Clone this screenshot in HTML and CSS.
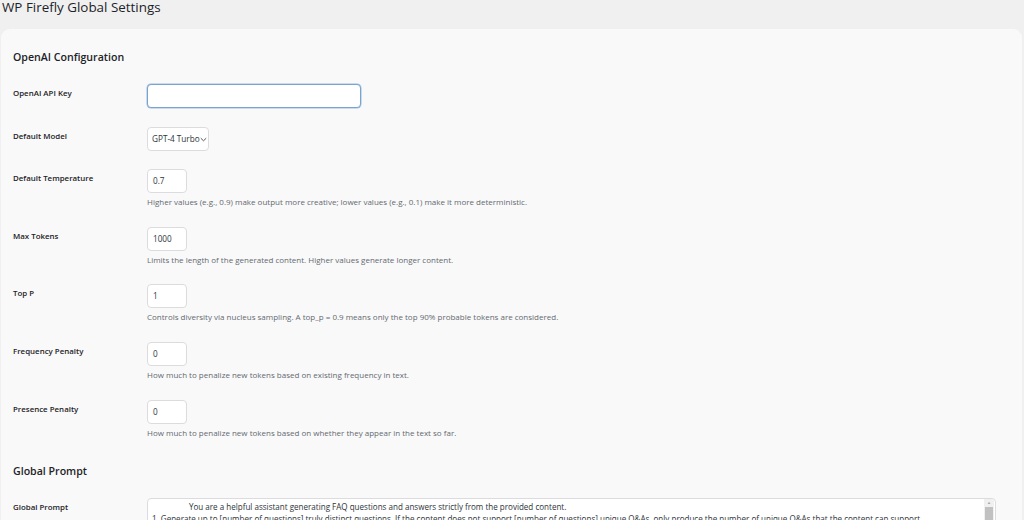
FILE: index.html
```html
<!DOCTYPE html>
<html lang="en">
<head>
<meta charset="utf-8">
<title>WP Firefly Global Settings</title>
<link rel="stylesheet" href="styles.css">
</head>
<body>
<div class="wrap">
  <h1 class="page-title">WP Firefly Global Settings</h1>
  <div class="card">
    <h2 class="section-title">OpenAI Configuration</h2>
    <div class="row">
      <div class="label">OpenAI API Key</div>
      <div class="field"><div class="input input-key focused"></div></div>
    </div>
    <div class="row">
      <div class="label">Default Model</div>
      <div class="field">
        <div class="select"><span class="select-text">GPT-4 Turbo</span><svg class="chev" width="7" height="5" viewBox="0 0 7 5"><path d="M0.8 1.2 L3.5 3.8 L6.2 1.2" fill="none" stroke="#3c434a" stroke-width="0.9"/></svg></div>
      </div>
    </div>
    <div class="row">
      <div class="label">Default Temperature</div>
      <div class="field">
        <div class="input input-small">0.7</div>
        <p class="desc">Higher values (e.g., 0.9) make output more creative; lower values (e.g., 0.1) make it more deterministic.</p>
      </div>
    </div>
    <div class="row">
      <div class="label">Max Tokens</div>
      <div class="field">
        <div class="input input-small">1000</div>
        <p class="desc">Limits the length of the generated content. Higher values generate longer content.</p>
      </div>
    </div>
    <div class="row">
      <div class="label">Top P</div>
      <div class="field">
        <div class="input input-small">1</div>
        <p class="desc">Controls diversity via nucleus sampling. A top_p = 0.9 means only the top 90% probable tokens are considered.</p>
      </div>
    </div>
    <div class="row">
      <div class="label">Frequency Penalty</div>
      <div class="field">
        <div class="input input-small">0</div>
        <p class="desc">How much to penalize new tokens based on existing frequency in text.</p>
      </div>
    </div>
    <div class="row">
      <div class="label">Presence Penalty</div>
      <div class="field">
        <div class="input input-small">0</div>
        <p class="desc">How much to penalize new tokens based on whether they appear in the text so far.</p>
      </div>
    </div>
    <h2 class="section-title section-gap">Global Prompt</h2>
    <div class="row">
      <div class="label">Global Prompt</div>
      <div class="field">
        <div class="textarea">
          <div class="ta-text">
            <div class="ta-line ta-indent">You are a helpful assistant generating FAQ questions and answers strictly from the provided content.</div>
            <div class="ta-line">1. Generate up to [number of questions] truly distinct questions. If the content does not support [number of questions] unique Q&amp;As, only produce the number of unique Q&amp;As that the content can support.</div>
          </div>
          <div class="scrollbar"><div class="sb-arrow">&#9650;</div><div class="sb-thumb"></div></div>
        </div>
      </div>
    </div>
  </div>
</div>
</body>
</html>
```

FILE: styles.css
```css
html, body {
  margin: 0;
  padding: 0;
  background: #f0f0f1;
  height: 100%;
  overflow: hidden;
}
body {
  font-family: "Open Sans", "Noto Sans", "Liberation Sans", sans-serif;
  color: #1d2327;
}
.wrap {
  padding: 0 2px 0 1px;
}
.page-title {
  margin: -3px 0 0 1px;
  font-size: 13.4px;
  font-weight: 400;
  line-height: 20px;
  color: #1d2327;
  height: 32px;
}
.card {
  background: #f9f9f9;
  border-radius: 9px 9px 0 0;
  padding: 20px 12px 0 12px;
  min-height: 600px;
}
.section-title {
  margin: 0 0 9px 0;
  font-size: 10.6px;
  font-weight: 600;
  line-height: 16px;
}
.section-gap {
  margin-top: 16px;
  margin-bottom: 9px;
}
.row {
  display: grid;
  grid-template-columns: 134px 1fr;
  padding: 10px 0 8.6px 0;
}
.label {
  font-size: 7.9px;
  font-weight: 600;
  line-height: 12px;
  padding-top: 3px;
}
.field {
  display: flex;
  flex-direction: column;
  align-items: flex-start;
}
.input {
  box-sizing: border-box;
  height: 24px;
  background: #fff;
  border: 1px solid #dcdcde;
  border-radius: 4px;
  font-size: 8.2px;
  line-height: 22px;
  padding: 0 5px;
  color: #2c3338;
}
.input-key {
  width: 214px;
}
.focused {
  border-color: #7aa3d0;
  box-shadow: 0 0 0 0.5px #9dbde0;
}
.input-small {
  width: 40px;
}
.select {
  box-sizing: border-box;
  height: 24px;
  width: 62px;
  background: #fff;
  border: 1px solid #dcdcde;
  border-radius: 4px;
  display: flex;
  align-items: center;
  padding-left: 4px;
  font-size: 8.2px;
  color: #2c3338;
  white-space: nowrap;
  overflow: hidden;
}
.chev {
  flex: none;
  margin-top: 1px;
}
.desc {
  margin: 3px 0 0 0;
  font-size: 8px;
  line-height: 12px;
  color: #646970;
}
.textarea {
  box-sizing: border-box;
  width: 849px;
  height: 60px;
  background: #fff;
  border: 1px solid #dcdcde;
  border-radius: 4px;
  display: flex;
  overflow: hidden;
}
.ta-text {
  flex: 1;
  padding: 2px 4px;
  font-size: 8.05px;
  line-height: 12px;
  color: #2c3338;
  white-space: nowrap;
  overflow: hidden;
}
.ta-indent {
  padding-left: 37px;
}
.scrollbar {
  flex: none;
  width: 10px;
  margin-right: 1px;
  background: #f0f0f0;
  display: flex;
  flex-direction: column;
  align-items: center;
}
.sb-arrow {
  font-size: 4px;
  line-height: 8px;
  color: #a3a3a3;
}
.sb-thumb {
  width: 8px;
  height: 30px;
  background: #c1c1c1;
}
```
